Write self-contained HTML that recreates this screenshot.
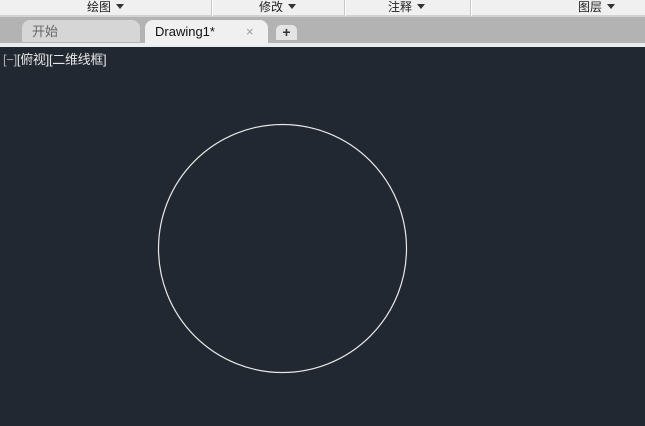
<!DOCTYPE html><html><head><style>
body{margin:0;width:645px;height:426px;background:#222831;overflow:hidden;font-family:"Liberation Sans","Noto Sans CJK SC",sans-serif;position:relative}
.top{position:absolute;left:0;top:0;width:645px;height:15px;background:#f0f0f0;border-bottom:2px solid #d2d2d2}
.m{position:absolute;top:0;font-size:12px;line-height:15px;color:#222}
.sep{position:absolute;top:0;width:1px;height:16px;background:#c8c8c8;border-right:1px solid #fff}
.tri{display:inline-block;width:0;height:0;border-left:4px solid transparent;border-right:4px solid transparent;border-top:5px solid #333;margin-left:5px;vertical-align:2px}
.bar{position:absolute;left:0;top:17px;width:645px;height:26px;background:#b3b3b3}
.strip{position:absolute;left:0;top:43px;width:645px;height:4px;background:#ececec}
.t1{position:absolute;left:22px;top:20px;width:118px;height:22px;background:#d6d6d6;border-radius:8px 8px 0 0;font-size:13px;line-height:24px;color:#666;padding-left:10px;box-sizing:border-box}
.t2{position:absolute;left:145px;top:20px;width:123px;height:25px;background:#f0f0f0;border-radius:8px 8px 0 0;font-size:13px;line-height:24px;color:#111;padding-left:10px;box-sizing:border-box}
.t3{position:absolute;left:276px;top:25px;width:21px;height:15px;background:#e4e4e4;border-radius:5px 5px 0 0;font-size:14px;font-weight:bold;line-height:15px;text-align:center;color:#333}
.lab{position:absolute;left:3px;top:52px;font-size:13px;color:#e6e6e6;line-height:16px;letter-spacing:-0.3px}
</style></head><body>
<div class="top"></div>
<div class="m" style="left:87px">绘图<span class="tri"></span></div>
<div class="sep" style="left:211px"></div>
<div class="m" style="left:259px">修改<span class="tri"></span></div>
<div class="sep" style="left:344px"></div>
<div class="m" style="left:388px">注释<span class="tri"></span></div>
<div class="sep" style="left:470px"></div>
<div class="m" style="left:578px">图层<span class="tri"></span></div>
<div class="bar"></div>
<div class="strip"></div>
<div class="t1">开始</div>
<div class="t2">Drawing1*<span style="position:absolute;left:101px;color:#999;font-size:13px">×</span></div>
<div class="t3">+</div>
<div class="lab"><span style="color:#aaa">[−]</span>[俯视][二维线框]</div>
<svg style="position:absolute;left:0;top:0" width="645" height="426"><circle cx="282.5" cy="248.5" r="124" fill="none" stroke="#e8e8e8" stroke-width="1.2"/></svg>
</body></html>
